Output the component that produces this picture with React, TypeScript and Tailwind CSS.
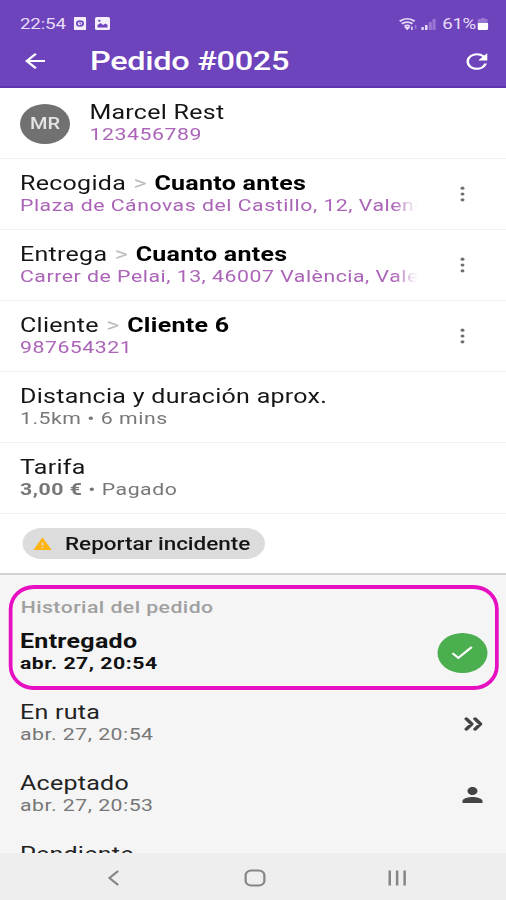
import type { ReactNode } from "react";
import { MdArrowBack, MdCheck, MdPerson, MdRefresh, MdWarning } from "react-icons/md";

type OrderRow = {
  label: string;
  value?: string;
  detail: ReactNode;
  menu?: boolean;
  link?: boolean;
};

const ORDER_ROWS: OrderRow[] = [
  {
    label: "Recogida",
    value: "Cuanto antes",
    detail: "Plaza de Cánovas del Castillo, 12, Valencia",
    menu: true,
    link: true,
  },
  {
    label: "Entrega",
    value: "Cuanto antes",
    detail: "Carrer de Pelai, 13, 46007 València, Valencia",
    menu: true,
    link: true,
  },
  { label: "Cliente", value: "Cliente 6", detail: "987654321", menu: true, link: true },
  { label: "Distancia y duración aprox.", detail: "1.5km • 6 mins" },
  {
    label: "Tarifa",
    detail: (
      <>
        <b className="font-bold">3,00 €</b> • Pagado
      </>
    ),
  },
];

function MoreIcon() {
  return (
    <svg width="8" height="18" viewBox="0 0 8 18" className="fill-[#707070]">
      <circle cx="4" cy="3.2" r="1.6" />
      <circle cx="4" cy="9" r="1.6" />
      <circle cx="4" cy="14.8" r="1.6" />
    </svg>
  );
}

function DoubleArrowIcon() {
  return (
    <svg
      width="16"
      height="16"
      viewBox="0 0 16 16"
      fill="none"
      stroke="#444"
      strokeWidth="3"
      strokeLinecap="round"
      strokeLinejoin="round"
      className="mr-[3px]"
    >
      <path d="M2 2.8 6.4 8 2 13.2M9 2.8 13.4 8 9 13.2" />
    </svg>
  );
}

function StatusBar() {
  return (
    <div className="flex h-[34px] items-center justify-between pt-[13px] pr-[14px] pl-[16px] text-[#e6dcf7]">
      <div className="flex items-center">
        <span className="w-[43px] text-[15px] leading-5 tracking-[-0.15px]">22:54</span>
        <svg width="10" height="13" viewBox="0 0 10 13">
          <rect width="10" height="13" rx="1" fill="#f3edfc" />
          <circle cx="5" cy="6.5" r="2.5" fill="none" stroke="#6e44bc" strokeWidth="1.4" />
          <path d="M5 5v2h1" fill="none" stroke="#6e44bc" strokeWidth=".8" />
        </svg>
        <svg width="12" height="13" viewBox="0 0 12 13" className="ml-[7px]">
          <rect width="12" height="13" rx="1.5" fill="#f3edfc" />
          <path d="M2 10.5V8l2.5-2 2 2 2-1.5L10 8v2.5z" fill="#6e44bc" />
          <circle cx="3.5" cy="3.8" r="1" fill="#6e44bc" />
        </svg>
      </div>
      <div className="flex items-center">
        <svg width="15" height="14" viewBox="0 0 15 14" fill="none" stroke="#e6dcf7">
          <path d="M.8 4.2C4.500 1 9 1 12.700 4.200M2.500 6.700c2.500-2 6-2 8.500 0M4.700 9.200c1.300-1 2.800-1 4.100 0" strokeWidth="1.8" />
          <path d="M5.300 10.300h3l-1.500 2zM10.500 9.500v3.500" strokeWidth="1.200" />
          <path d="M13.500 8v4" stroke="#9877d2" strokeWidth="1.200" />
        </svg>
        <svg width="12" height="14" viewBox="0 0 12 14" className="ml-[3px]">
          <path d="M0 10h2v3H0zM3 8h2v5H3z" fill="#e6dcf7" />
          <path d="M6 5h2.500v8H6zM9 2h2.500v11H9z" fill="#9877d2" />
        </svg>
        <span className="ml-[5px] w-[28px] text-[15px] leading-5 tracking-[-0.3px]">61%</span>
        <svg width="9" height="14" viewBox="0 0 9 14">
          <path d="M3 1h3v1h2v4H0V2h3z" fill="#9877d2" />
          <path d="M0 6h8.500v5.500a1.500 1.500 0 0 1-1.500 1.500H1.500A1.500 1.500 0 0 1 0 11.500z" fill="#fff" />
        </svg>
      </div>
    </div>
  );
}

function Header() {
  return (
    <header className="h-[88px] shrink-0 border-b-2 border-[#5c35ae] bg-[#6e44bc]">
      <StatusBar />
      <div className="flex h-[54px] items-center pr-[11px] pl-[16px] text-white">
        <MdArrowBack size={24} />
        <h1 className="ml-[32px] flex-1 text-[26px] font-medium leading-8 tracking-[-0.25px]">
          Pedido #0025
        </h1>
        <MdRefresh size={25} />
      </div>
    </header>
  );
}

function Row({ label, value, detail, menu, link }: OrderRow) {
  return (
    <div className="flex h-[71px] items-start border-b border-[#f3f3f3] pt-[12px] pl-[16px]">
      <div className="w-[318px]">
        <p className="text-[20px] leading-6 tracking-[0.22px] whitespace-nowrap text-[#151515]">
          {label}
          {value && (
            <>
              <span className="px-[6px] text-[#bdbdbd]">&gt;</span>
              <b className="font-bold text-black">{value}</b>
            </>
          )}
        </p>
        <p
          className={
            link
              ? "overflow-hidden text-[17px] leading-5 tracking-[0.42px] whitespace-nowrap text-[#ab64b8] [mask-image:linear-gradient(to_right,black_94%,transparent)]"
              : "text-[17px] leading-5 tracking-[0.42px] whitespace-nowrap text-[#777]"
          }
        >
          {detail}
        </p>
      </div>
      {menu && (
        <div className="ml-[32px] pt-[14px]">
          <MoreIcon />
        </div>
      )}
    </div>
  );
}

function HistoryRow({ label, date, icon, active }: { label: string; date: string; icon?: ReactNode; active?: boolean }) {
  return (
    <div className="flex h-[71px] items-center justify-between pr-[15px] pl-[16px]">
      <div className={active ? "-mt-[4px] font-bold text-[#111]" : "-mt-[4px] text-[#222]"}>
        <p className="text-[20px] leading-6 tracking-[0.22px]">{label}</p>
        <p className={active ? "text-[17px] leading-5 tracking-[0.4px]" : "text-[17px] leading-5 tracking-[0.4px] text-[#777]"}>
          {date}
        </p>
      </div>
      {icon}
    </div>
  );
}

function NavBar() {
  return (
    <nav className="h-[47px] shrink-0 bg-[#eee]">
      <svg width="404.8" height="47" viewBox="0 0 404.8 47" fill="none" stroke="#858585" strokeWidth="1.8">
        <path d="m94.500 18-7 7 7 7" />
        <rect x="196.500" y="17.500" width="15" height="15" rx="4.500" />
        <path d="M311.800 17.500v15M317.700 17.500v15M323.700 17.500v15" strokeWidth="2" />
      </svg>
    </nav>
  );
}

export default function App() {
  return (
    <div className="h-[900px] w-[506px] overflow-hidden bg-white">
      {/* the phone screen is 4:5 narrower than the window, so it is stretched to fill it */}
      <div className="flex h-[900px] w-[404.8px] origin-top-left scale-x-125 flex-col font-[Roboto,'Liberation_Sans',sans-serif]">
        <Header />
        <main className="flex min-h-0 flex-1 flex-col overflow-hidden">
          <div className="flex h-[71px] shrink-0 border-b border-[#f3f3f3] pl-[16px]">
            <div className="mt-[16px] flex size-10 items-center justify-center rounded-full bg-[#717171] text-[16px] font-medium text-[#e4e4e4]">
              MR
            </div>
            <div className="ml-[15.5px] pt-[12px]">
              <p className="text-[20px] leading-6 tracking-[0.22px] text-[#151515]">Marcel Rest</p>
              <p className="text-[17px] leading-5 tracking-[0.45px] text-[#ab64b8]">123456789</p>
            </div>
          </div>

          <div className="shrink-0">
            {ORDER_ROWS.map((row) => (
              <Row key={row.label} {...row} />
            ))}
          </div>

          <div className="h-[61px] shrink-0 border-b-2 border-[#d3d3d3] pt-[14px] pl-[18px]">
            <button className="flex h-[31px] w-[194px] items-center rounded-full bg-[#dcdcdc] pl-[8px] text-[18px] font-medium tracking-[-0.03px] whitespace-nowrap text-[#151515]">
              <MdWarning size={16} className="mr-[10px] text-[#fdb414]" />
              Reportar incidente
            </button>
          </div>

          <section className="relative flex-1 bg-[#f5f5f5]">
            <h2 className="h-[42px] pt-[20px] pl-[16.5px] text-[17px] font-medium leading-6 tracking-[0.35px] text-[#a0a0a0]">
              Historial del pedido
            </h2>
            <HistoryRow
              label="Entregado"
              date="abr. 27, 20:54"
              active
              icon={
                <span className="flex size-10 items-center justify-center rounded-full bg-[#4bae4f] text-white">
                  <MdCheck size={23} />
                </span>
              }
            />
            <HistoryRow label="En ruta" date="abr. 27, 20:54" icon={<DoubleArrowIcon />} />
            <HistoryRow label="Aceptado" date="abr. 27, 20:53" icon={<MdPerson size={24} color="#444" />} />
            <HistoryRow label="Pendiente" date="abr. 27, 20:53" />
            <div className="absolute top-[10px] left-[7px] h-[105px] w-[392px] rounded-[20px/24px] border-x-[3.5px] border-y-[4.5px] border-[#e60fc1]" />
          </section>
        </main>
        <NavBar />
      </div>
    </div>
  );
}
